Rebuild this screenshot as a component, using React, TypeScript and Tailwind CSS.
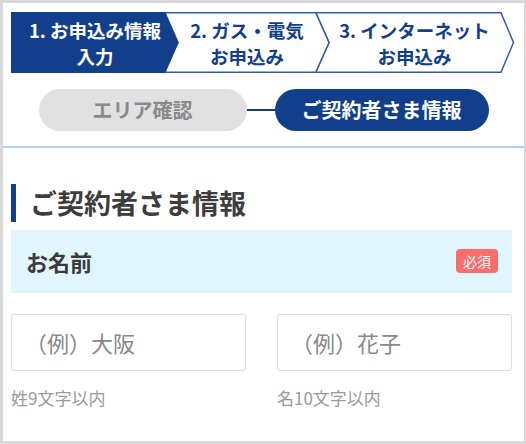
import React from "react";

const font = { fontFamily: '"Noto Sans CJK JP", "Noto Sans", sans-serif' };

function StepBar() {
  return (
    <div className="relative w-[504px] h-[61px]">
      <svg className="absolute inset-0" width="504" height="61" viewBox="0 0 504 61">
        <path d="M304.75 0.75 L490 0.75 L502.5 30.5 L490 60.25 L304.75 60.25 L318 30.5 Z" fill="#fff" stroke="#2f5ca8" strokeWidth="1.5" />
        <path d="M154 0.75 L304.75 0.75 L318 30.5 L304.75 60.25 L154 60.25 L167 30.5 Z" fill="#fff" stroke="#2f5ca8" strokeWidth="1.5" />
        <path d="M0 0 L154 0 L167.5 30.5 L154 61 L0 61 Z" fill="#123f8c" />
      </svg>
      <div className="relative flex h-full items-center text-[18.5px] font-bold leading-[26px]">
        <div className="w-[168px] text-center text-white">
          <div>1. お申込み情報</div>
          <div>入力</div>
        </div>
        <div className="w-[136px] text-center text-[#123f8c]">
          <div>2. ガス・電気</div>
          <div>お申込み</div>
        </div>
        <div className="w-[199px] text-center text-[#123f8c]">
          <div>3. インターネット</div>
          <div>お申込み</div>
        </div>
      </div>
    </div>
  );
}

export default function App() {
  return (
    <div
      className="w-[526px] h-[444px] border-[3px] border-r-2 border-[#d8d8d8] bg-white overflow-hidden"
      style={font}
    >
      <div className="pl-[8px] pt-[9px]">
        <StepBar />
      </div>
      <div className="mt-[16px] flex items-center justify-center">
        <div className="w-[208px] h-[42px] rounded-full bg-[#e1e1e1] flex items-center justify-center text-[20px] font-bold text-[#8a8a8a]">
          エリア確認
        </div>
        <div className="w-[28px] h-[2px] bg-[#123f8c]" />
        <div className="w-[214px] h-[42px] rounded-full bg-[#123f8c] flex items-center justify-center text-[20px] font-bold text-white">
          ご契約者さま情報
        </div>
      </div>
      <div className="mt-[15px] h-[1.5px] bg-[#a6d4f5]" />
      <div className="pl-[8px]">
        <div className="mt-[36px] h-[38px] border-l-[5px] border-[#123f8c] pl-[14px] flex items-center text-[27px] font-bold text-[#3d3d3d] leading-none">
          ご契約者さま情報
        </div>
        <div className="mt-[8px] w-[501px] h-[63px] bg-[#e1f5fd] flex items-center justify-between pl-[15px] pr-[14px]">
          <span className="text-[22px] font-bold text-[#3a3a3a]">お名前</span>
          <span className="w-[42px] h-[24px] rounded-[4px] bg-[#fb6d6d] text-white text-[14px] flex items-center justify-center">
            必須
          </span>
        </div>
        <div className="mt-[21px] w-[501px] grid grid-cols-2 gap-x-[31px]">
          <div>
            <div className="h-[57px] border border-[#dcdcdc] rounded-[3px] flex items-center pl-[13px] text-[22px] text-[#888888]">
              （例）大阪
            </div>
            <div className="mt-[15px] text-[17px] leading-[24px] text-[#9a9a9a]">姓9文字以内</div>
          </div>
          <div>
            <div className="h-[57px] border border-[#dcdcdc] rounded-[3px] flex items-center pl-[13px] text-[22px] text-[#888888]">
              （例）花子
            </div>
            <div className="mt-[15px] text-[17px] leading-[24px] text-[#9a9a9a]">名10文字以内</div>
          </div>
        </div>
      </div>
    </div>
  );
}
